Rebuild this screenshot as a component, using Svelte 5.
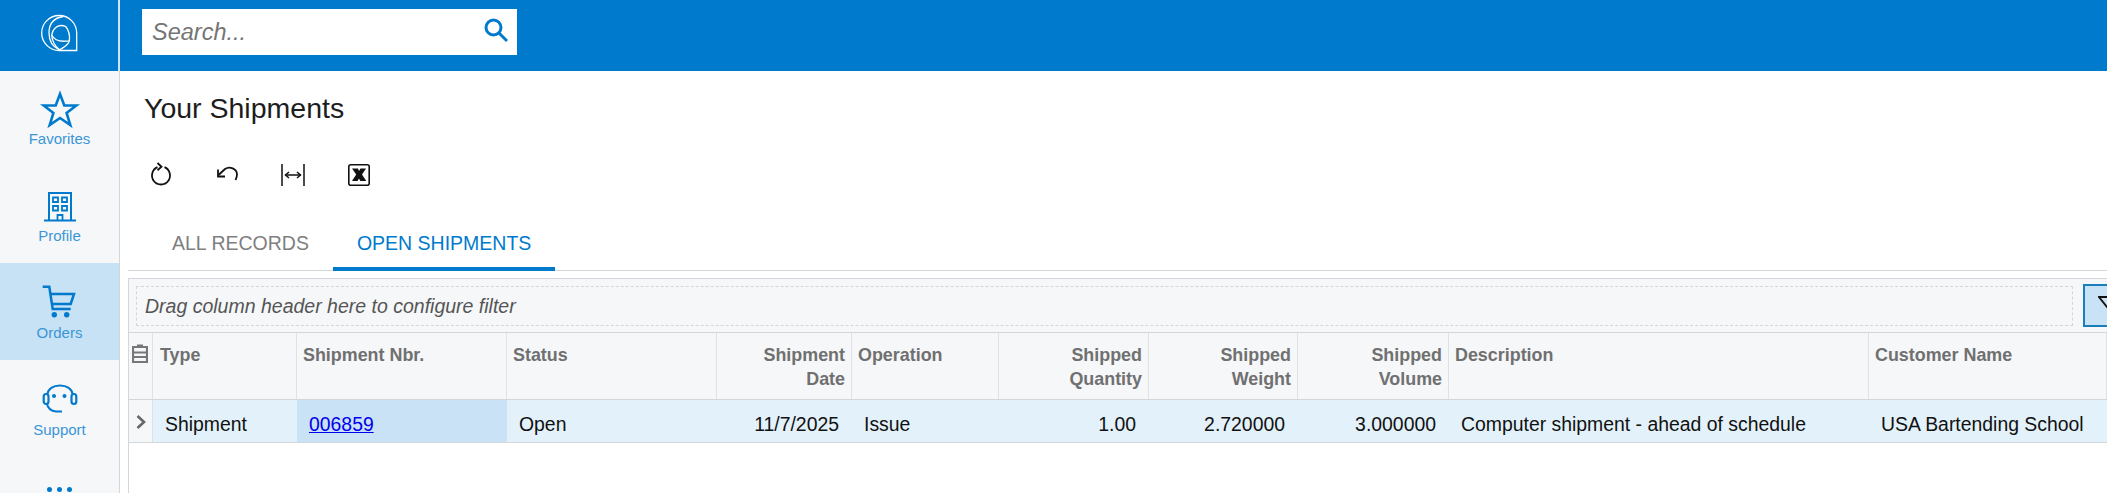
<script>
  const columns = [
    { head: 'Type', value: 'Shipment' },
    { head: 'Shipment Nbr.', link: '006859' },
    { head: 'Status', value: 'Open' },
    { head: 'Shipment Date', value: '11/7/2025', right: true },
    { head: 'Operation', value: 'Issue' },
    { head: 'Shipped Quantity', value: '1.00', right: true },
    { head: 'Shipped Weight', value: '2.720000', right: true },
    { head: 'Shipped Volume', value: '3.000000', right: true },
    { head: 'Description', value: 'Computer shipment - ahead of schedule' },
    { head: 'Customer Name', value: 'USA Bartending School' }
  ];
</script>

<div class="page">
  <header class="top">
    <div class="logo">
      <svg width="40" height="40" viewBox="0 0 40 40" fill="none" stroke="#fff" stroke-width="1.300">
        <path d="M37.700 37.500H20.200A17.500 17.500 0 1 1 37.700 20Z" />
        <path d="M24.300 3.500C14 5 10 12 10 19.800C10 28 14 34 20.300 36.800" />
        <path d="M12.700 22C13.500 16 18 12.500 22 12.500C24 12.500 25.500 12.800 26.700 13.500C29.500 17 31 23 30.300 27.800C24 28.800 16 29 12.700 22Z" />
        <path d="M30.300 27.800C29.500 31 25 35 20.300 36.800M12.700 22C13 28 16 33 20.300 36.800" />
      </svg>
    </div>
    <div class="search">
      <span>Search...</span>
      <svg width="26" height="26" viewBox="0 0 26 26" fill="none" stroke="#007acc" stroke-width="3">
        <circle cx="10.500" cy="10.500" r="7.500" />
        <path d="M16 16l8 8" />
      </svg>
    </div>
  </header>

  <div class="body">
    <nav class="side">
      <div class="item">
        <svg width="40" height="40" viewBox="0 0 40 40" fill="none" stroke="#007acc" stroke-width="2.600">
          <path d="M20 5l4.300 11.500h12L26.600 24l3.700 12L20 29l-10.300 7 3.700-12-9.700-7.500h12Z" />
        </svg>
        <span>Favorites</span>
      </div>
      <div class="item">
        <svg width="40" height="40" viewBox="0 0 40 40" fill="none" stroke="#007acc" stroke-width="1.800">
          <path d="M9 34.500V7h22v27.500M4 34.500h32" stroke-width="2" />
          <path d="M13 11.500h5v4.500h-5zM22 11.500h5v4.500h-5zM13 20h5v4.500h-5zM22 20h5v4.500h-5zM17.500 34v-5h5v5" />
        </svg>
        <span>Profile</span>
      </div>
      <div class="item active">
        <svg width="40" height="40" viewBox="0 0 40 40" fill="none" stroke="#007acc" stroke-width="2.500">
          <path d="M2.700 3.700H9.300L12.700 26H30.700" />
          <path d="M11 11H34L30.700 21H11.700" />
          <circle cx="14.300" cy="31.700" r="2.700" fill="#007acc" stroke="none" />
          <circle cx="26.700" cy="31.700" r="2.700" fill="#007acc" stroke="none" />
        </svg>
        <span>Orders</span>
      </div>
      <div class="item">
        <svg width="40" height="40" viewBox="0 0 40 40" fill="none" stroke="#007acc" stroke-width="2">
          <path d="M7.500 14C8 9 13 5.500 20 5.500S32 9 32.500 14" />
          <rect x="3.700" y="14" width="4.800" height="10" rx="2.400" stroke-width="2.200" />
          <rect x="31.500" y="14" width="4.800" height="10" rx="2.400" stroke-width="2.200" />
          <path d="M7 24C8 29 12 31 16 31.500H22" />
          <circle cx="14" cy="16" r="2" fill="#007acc" stroke="none" />
          <circle cx="24.500" cy="16" r="2" fill="#007acc" stroke="none" />
        </svg>
        <span>Support</span>
      </div>
      <div class="more"><i></i><i></i><i></i></div>
    </nav>

    <main class="main">
      <h1>Your Shipments</h1>
      <div class="tools">
        <svg width="24" height="24" viewBox="0 0 24 24" fill="none" stroke="#111" stroke-width="1.800">
          <path d="M15.500 5.200A9 9 0 1 1 8.500 5.200" />
          <path d="M8.500 1l4 3.800-4 3.400" />
        </svg>
        <svg width="24" height="24" viewBox="0 0 24 24" fill="none" stroke="#111" stroke-width="1.800">
          <path d="M3.500 13L10 7c4.500-3 12-.5 12 5.500 0 2-.5 3.500-1.500 5.500" />
          <path d="M3 7.500V14.500H10" />
        </svg>
        <svg width="24" height="24" viewBox="0 0 24 24" fill="none" stroke="#111" stroke-width="1.500">
          <path d="M1 2v22M23 2v22M4.500 13h15" />
          <path d="M8 10l-3.500 3L8 16M16 10l3.500 3-3.500 3" />
        </svg>
        <svg width="24" height="24" viewBox="0 0 24 24" fill="none">
          <rect x="1.800" y="2.800" width="20.400" height="20.400" rx="2" stroke="#111" stroke-width="1.600" />
          <path d="M5 6.500h6l1 2.500 1.500-2.500H19l-4 6 4.300 6.500h-6l-1.300-2.500-1.500 2.500H5l4.200-6.500Z" fill="#111" />
        </svg>
      </div>
      <div class="tabs">
        <div class="tab">ALL RECORDS</div>
        <div class="tab on">OPEN SHIPMENTS</div>
      </div>

      <section class="grid">
        <div class="filter">
          <div class="drop">Drag column header here to configure filter</div>
          <div class="funnel">
            <svg width="20" height="14" viewBox="0 0 20 14" fill="none" stroke="#111" stroke-width="1.800">
              <path d="M1 1h16l-8 10Z" />
            </svg>
          </div>
        </div>
        <div class="cols head">
          <div class="sel">
            <svg width="16" height="19" viewBox="0 0 16 19" fill="none" stroke="#777" stroke-width="2.200">
              <path d="M1 3h14v15H1zM1 8.500h14M1 13h14M5 1.500h6" />
            </svg>
          </div>
          {#each columns as c}
            <div class="hc" class:right={c.right}>{c.head}</div>
          {/each}
        </div>
        <div class="cols row">
          <div class="sel arrow">
            <svg width="12" height="16" viewBox="0 0 12 16" fill="none" stroke="#666" stroke-width="2.600">
              <path d="M2.500 2l6.500 6-6.500 6" />
            </svg>
          </div>
          {#each columns as c}
            <div class="td" class:right={c.right} class:picked={c.link}>
              {#if c.link}<a href="#top">{c.link}</a>{:else}{c.value}{/if}
            </div>
          {/each}
        </div>
      </section>
    </main>
  </div>
</div>

<style>
  :global(body) { margin: 0; }
  .page {
    width: 2107px;
    height: 493px;
    overflow: hidden;
    display: flex;
    flex-direction: column;
    font-family: "Liberation Sans", Arial, sans-serif;
    background: #fff;
  }
  .top { height: 71px; flex: none; display: flex; background: #007acc; }
  .logo {
    width: 118px;
    border-right: 2px solid #cfe4f4;
    display: flex;
    align-items: center;
    justify-content: center;
  }
  .logo svg { margin-top: -6px; }
  .search {
    margin: 9px 0 0 22px;
    width: 375px;
    height: 46px;
    background: #fff;
    display: flex;
    align-items: center;
    justify-content: space-between;
    padding: 0 8px 0 10px;
    box-sizing: border-box;
    font-size: 23.500px;
    font-style: italic;
    color: #757575;
  }
  .search svg { margin-top: -4px; }
  .body { flex: 1; display: flex; min-height: 0; }
  .side {
    width: 119px;
    flex: none;
    background: #f5f7f9;
    border-right: 1px solid #d3d6da;
    color: #3a96d6;
    font-size: 15px;
  }
  .item {
    height: 97px;
    display: flex;
    flex-direction: column;
    align-items: center;
    padding-top: 20px;
    box-sizing: border-box;
    gap: 1px;
  }
  .item:first-child { height: 95px; padding-top: 18px; }
  .item.active { background: #c7e1f5; }
  .more { display: flex; justify-content: center; gap: 5px; padding-top: 30px; }
  .more i { width: 5px; height: 5px; border-radius: 50%; background: #007acc; }
  .main { flex: 1; min-width: 0; display: flex; flex-direction: column; padding-left: 8px; }
  h1 { margin: 20px 0 0 16px; font-size: 28.500px; font-weight: 400; line-height: 34px; color: #1d1d1d; }
  .tools { display: flex; gap: 42px; margin: 37px 0 0 21px; height: 24px; flex: none; }
  .tabs {
    display: flex;
    flex: none;
    margin-top: 36px;
    padding-left: 20px;
    border-bottom: 1px solid #d3d6da;
    height: 48px;
  }
  .tab { padding: 9px 24px 0; font-size: 19.500px; line-height: 24px; color: #808080; }
  .tab.on { color: #007acc; box-shadow: inset 0 -4px 0 #007acc; height: 49px; box-sizing: border-box; }
  .grid {
    margin-top: 7px;
    flex: 1;
    border-left: 1px solid #d3d6da;
    border-top: 1px solid #d3d6da;
    min-height: 0;
  }
  .filter {
    height: 54px;
    box-sizing: border-box;
    background: #f5f7f9;
    display: flex;
    gap: 10px;
    padding: 7px 0 0 7px;
    border-bottom: 1px solid #d3d6da;
  }
  .drop {
    flex: 1;
    height: 40px;
    box-sizing: border-box;
    border: 1px dashed #d3d6da;
    line-height: 38px;
    padding-left: 8px;
    font-size: 19.500px;
    font-style: italic;
    color: #555;
  }
  .funnel {
    width: 24px;
    height: 43px;
    margin-top: -2px;
    box-sizing: border-box;
    border: 2px solid #1a7fb8;
    border-right: 0;
    background: #c9e2f6;
    padding: 10px 0 0 13px;
    overflow: hidden;
  }
  .cols {
    display: grid;
    grid-template-columns: 24px 144px 210px 210px 135px 147px 150px 149px 151px 420px 1fr;
  }
  .head { height: 67px; background: #f5f7f9; border-bottom: 1px solid #d3d6da; box-sizing: border-box; }
  .hc {
    padding: 11px 6px 0 6px;
    border-right: 1px solid #dfe2e5;
    font-size: 17.900px;
    font-weight: 700;
    line-height: 23.500px;
    color: #707070;
  }
  .sel + .hc { padding-left: 7px; }
  .hc.right { padding-left: 30px; }
  .row { height: 43px; background: #e3f1fa; border-bottom: 1px solid #d3d6da; box-sizing: border-box; font-size: 19.400px; color: #111; }
  .sel { border-right: 1px solid #dfe2e5; padding: 11px 0 0 3px; background: #f5f7f9; box-sizing: border-box; }
  .arrow { padding: 12px 0 0 6px; }
  .td { padding: 0 13px 0 12px; line-height: 48px; white-space: nowrap; height: 42px; }
  .td.picked { background: #cae2f6; }
  .right { text-align: right; }
  a { color: #0000ee; }
</style>
